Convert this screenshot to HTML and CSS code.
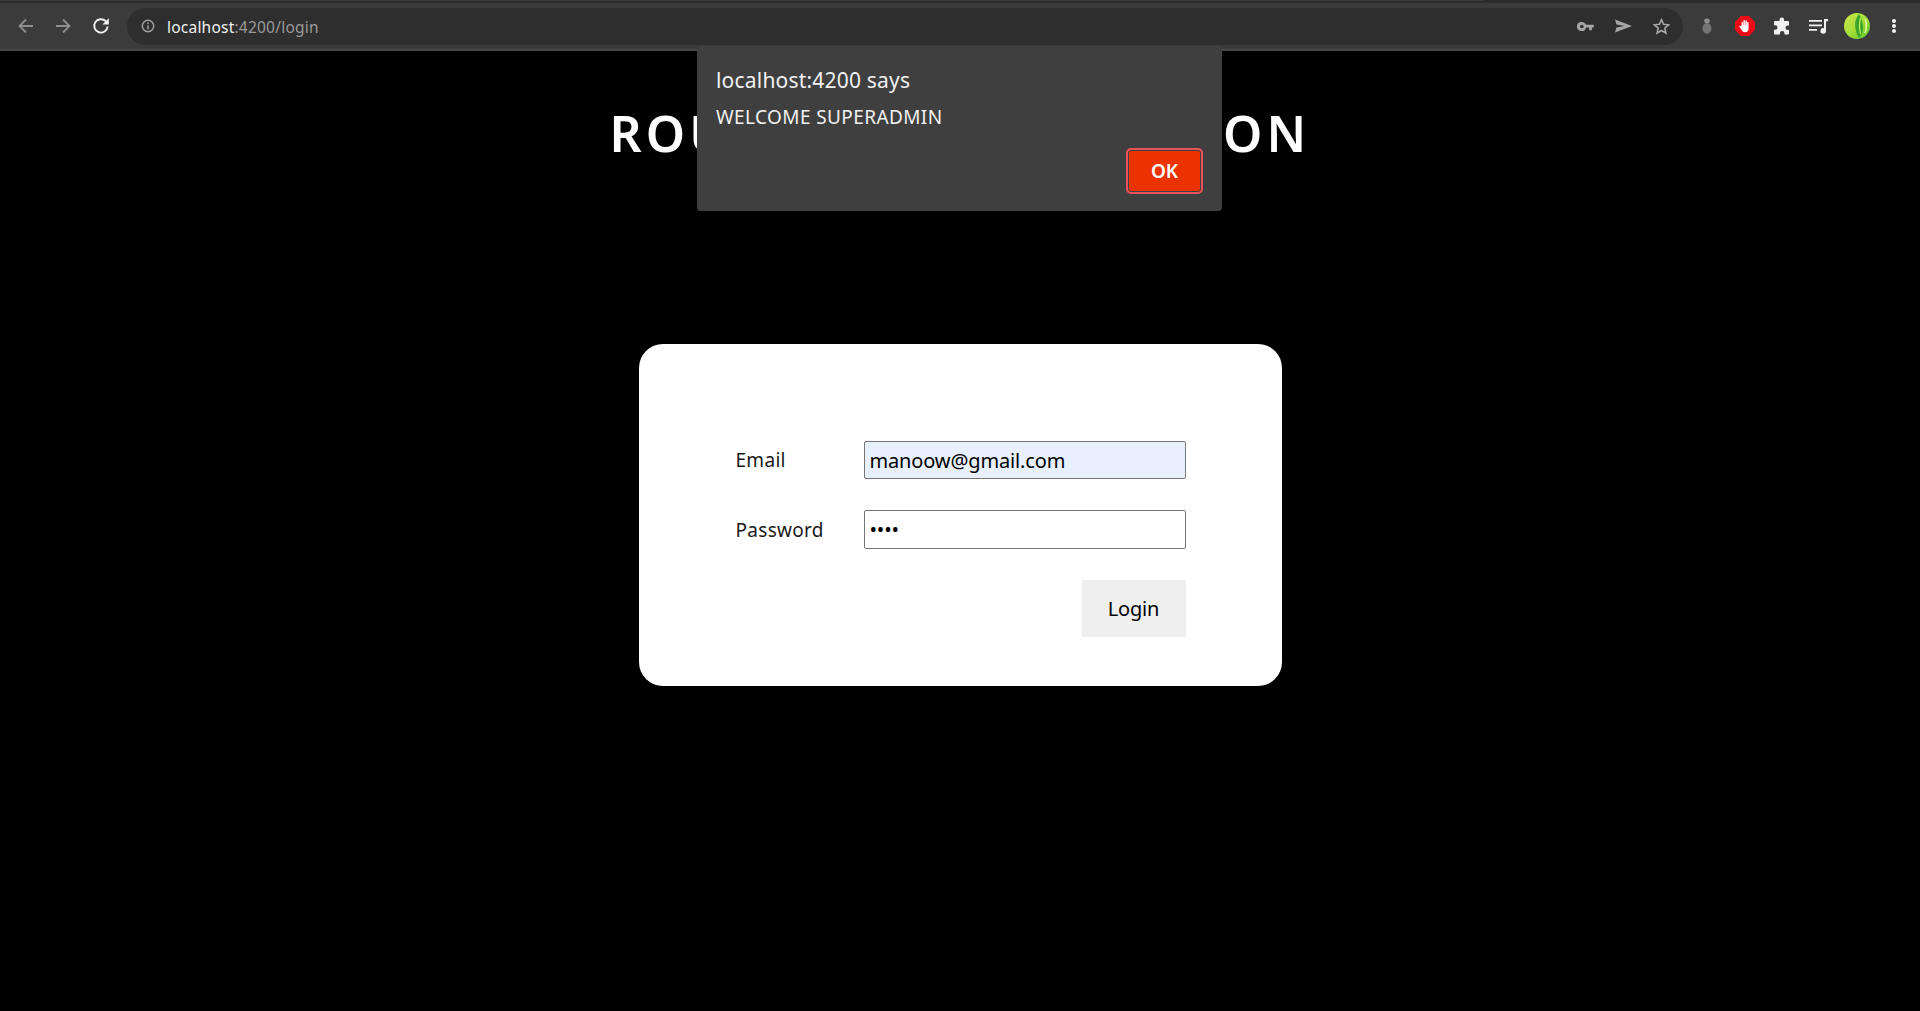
FILE: index.html
```html
<!DOCTYPE html>
<html lang="en">
<head>
<meta charset="utf-8">
<title>Login</title>
<link rel="stylesheet" href="styles.css">
</head>
<body>
<header class="chrome">
  <div class="tabstrip"><div class="tab-edge"></div></div>
  <div class="toolbar">
    <svg class="ico nav back" viewBox="0 0 16 16"><path d="M15 8H2M8 1.500 1.500 8 8 14.500"/></svg>
    <svg class="ico nav fwd" viewBox="0 0 16 16"><path d="M1 8h13M8 1.500 14.500 8 8 14.500"/></svg>
    <svg class="ico reload" viewBox="0 0 18 18"><path d="M15.600 9.500A6.700 6.700 0 1 1 13.700 4.200L15.800 6.300"/><path class="fill" d="M16.800 1.200v6.400h-6.400z"/></svg>
    <div class="omnibox">
      <svg class="ico info" viewBox="0 0 14 14"><circle cx="7" cy="7" r="5.700"/><path d="M7 6.200v4M7 3.600v1.500"/></svg>
      <div class="url"><span class="host">localhost</span>:4200/login</div>
      <div class="omni-actions">
        <svg class="act key" viewBox="0 0 18 12"><path fill-rule="evenodd" d="M5 1a5 5 0 0 1 4.600 3H18v3h-2v3h-3V7H9.600A5 5 0 1 1 5 1zm0 3a2 2 0 1 0 0 4 2 2 0 0 0 0-4z"/></svg>
        <svg class="act send" viewBox="0 0 18 14"><path d="M0 0l18 7-18 7 1.500-5.500L10 7 1.500 5.500z"/></svg>
        <svg class="act star" viewBox="0 0 18 18"><path d="M9 1.800l2.200 4.900 5.300.5-4 3.500 1.200 5.200L9 13.200l-4.700 2.700 1.200-5.200-4-3.500 5.300-.5z"/></svg>
      </div>
    </div>
    <div class="extensions">
      <svg class="ext bug" viewBox="0 0 10 16"><ellipse class="bug-head" cx="5" cy="3" rx="2.800" ry="2.400"/><ellipse class="bug-body" cx="5" cy="10.300" rx="4.500" ry="5.400"/></svg>
      <svg class="ext stop" viewBox="0 0 20 20"><path class="stop-bg" d="M6 0h8l6 6v8l-6 6H6l-6-6V6z"/><path class="stop-hand" d="M6.500 10V6.500a.8.8 0 0 1 1.500 0V9h.4V4.500a.8.8 0 0 1 1.500 0V9h.4V4.800a.8.8 0 0 1 1.500 0V9.500h.3V6.500a.8.8 0 0 1 1.500 0v6c0 2.300-1.400 3.700-3.500 3.700-2 0-3-1-3.800-2.600L4.500 11c-.5-1 .8-1.700 1.300-1z"/></svg>
      <svg class="ext puzzle" viewBox="0 0 18 18"><path d="M6.500 2.700a2.300 2.300 0 0 1 4.600 0V4H15a1 1 0 0 1 1 1v3.500h-1.200a2.300 2.300 0 0 0 0 4.600H16V16.500a1 1 0 0 1-1 1h-3.500v-1.200a2.300 2.300 0 0 0-4.600 0v1.200H2a1 1 0 0 1-1-1V12.800h1.200a2.300 2.300 0 0 0 0-4.600H1V5a1 1 0 0 1 1-1h4.500z"/></svg>
      <svg class="ext queue" viewBox="0 0 19 15"><path d="M0 1h13v1.800H0zM0 5.500h13v1.800H0zM0 10h8v1.800H0z"/><path d="M15 0h4v2.300h-2V12a2.800 2.800 0 1 1-2-2.700z"/></svg>
      <svg class="avatar" viewBox="0 0 26 26"><defs><linearGradient id="leaf" x1="0" y1="0" x2="1" y2="1"><stop offset="0" stop-color="#cfe84c"/><stop offset=".5" stop-color="#a6de3a"/><stop offset="1" stop-color="#5cc42c"/></linearGradient></defs><circle cx="13" cy="13" r="13" fill="url(#leaf)"/><path d="M15 1c-3 4-4.500 8-3.800 13 .5 4 1.800 8 3.800 11 3-3 4.500-7 4-12C18.500 8 17 4 15 1z" fill="#3da52b"/><path d="M16.500 5c-1.200 5-1.200 11 0 16" stroke="#b9ea58" stroke-width="1.300" fill="none"/><path d="M21.500 6c1 4 1 10-.5 14" stroke="#e4f79a" stroke-width="1.500" fill="none"/></svg>
      <div class="kebab"><i></i><i></i><i></i></div>
    </div>
  </div>
</header>

<main class="page">
  <h1 class="title">ROUTE AUTHENTICATION</h1>
  <form class="card">
    <div class="row"><label class="label" for="email">Email</label><input class="field autofilled" id="email" type="text" value="manoow@gmail.com"></div>
    <div class="row row-pw"><label class="label" for="pw">Password</label><input class="field" id="pw" type="password" value="abcd"></div>
    <div class="actions"><button class="login" type="button">Login</button></div>
  </form>
</main>

<div class="dialog">
  <div class="dlg-title">localhost:4200 says</div>
  <div class="dlg-msg">WELCOME SUPERADMIN</div>
  <div class="dlg-actions"><button class="ok" type="button">OK</button></div>
</div>
</body>
</html>
```
FILE: styles.css
```css
* { box-sizing: border-box; }
html, body { margin: 0; height: 100%; }
body {
  background: #000;
  font-family: "Noto Sans", "Open Sans", sans-serif;
  overflow: hidden;
}
.chrome { height: 51px; background: #3b3b3b; }
.tabstrip { height: 3px; background: #2b2b2b; }
.tab-edge { width: 1484px; height: 1px; background: #3b3b3b; }
.toolbar { height: 48px; display: flex; align-items: center; border-bottom: 2px solid #474747; }
.ico { fill: none; stroke: #8e8e8e; stroke-width: 1.800; flex: none; }
.nav { width: 16px; height: 16px; }
.back { margin-left: 18px; }
.fwd { margin-left: 21px; }
.reload { width: 18px; height: 18px; margin-left: 21px; stroke: #f1f1f1; stroke-width: 1.900; }
.reload .fill { fill: #f1f1f1; stroke: none; }
.omnibox {
  width: 1556px; height: 37px; margin-left: 17px; border-radius: 19px; background: #2e2e2e;
  display: flex; align-items: center; padding-left: 14px;
}
.info { width: 14px; height: 14px; stroke: #a0a0a0; stroke-width: 1.500; }
.url { margin-left: 12px; padding-top: 1px; font-size: 15.500px; color: #9a9a9a; letter-spacing: .22px; white-space: nowrap; }
.host { color: #f1f1f1; }
.omni-actions { margin-left: auto; display: flex; align-items: center; gap: 21px; padding-right: 13px; }
.act { fill: #a6a6a6; flex: none; }
.key { width: 17px; height: 11px; }
.send { width: 17px; height: 14px; }
.star { width: 17px; height: 17px; fill: none; stroke: #a6a6a6; stroke-width: 1.700; }
.extensions { display: flex; align-items: center; flex: 1; }
.ext { flex: none; }
.bug { width: 10px; height: 16px; margin-left: 19px; }
.bug-head { fill: #8e8e8e; }
.bug-body { fill: #747474; }
.stop { width: 20px; height: 20px; margin-left: 23px; }
.stop-bg { fill: #ec0a17; }
.stop-hand { fill: #fff; }
.puzzle { width: 18px; height: 18px; margin-left: 18px; fill: #f1f1f1; }
.queue { width: 19px; height: 15px; margin-left: 18px; fill: #f1f1f1; }
.avatar { width: 26px; height: 26px; margin-left: 16px; flex: none; }
.kebab { width: 4px; margin-left: 22px; display: flex; flex-direction: column; gap: 1px; }
.kebab i { display: block; width: 4px; height: 4px; border-radius: 50%; background: #f1f1f1; }

.page { display: flex; flex-direction: column; align-items: center; }
.title {
  margin: 57px 0 0; color: #fff; font-size: 50px; font-weight: 600; line-height: 50px;
  letter-spacing: 4.150px; white-space: nowrap;
}
.card {
  width: 643px; height: 342px; margin: 186px 0 0; background: #fff; border-radius: 24px;
  padding: 97px 96px 0 97px;
}
.row { display: flex; align-items: center; height: 38px; }
.row-pw { margin-top: 31px; height: 39px; }
.label { width: 128px; font-size: 19px; color: #1a1a1a; letter-spacing: .3px; }
.field {
  width: 322px; height: 100%; border: 1px solid #767676; border-radius: 2px; padding: 0 5px;
  font-family: inherit; font-size: 20px; letter-spacing: -.15px; color: #000; background: #fff; outline: none;
}
.autofilled { background: #e8f0fe; }
.actions { display: flex; justify-content: flex-end; margin-top: 31px; }
.login {
  width: 104px; height: 57px; border: 0; background: #efefef; color: #000;
  font-family: inherit; font-size: 20px; letter-spacing: -.2px; padding: 0;
}

.dialog {
  position: absolute; left: 697px; top: 46px; width: 525px; height: 165px;
  background: #3f3f3f; border-radius: 4px; padding: 20px 19px 0 19px; color: #f1f1f1;
  display: flex; flex-direction: column;
}
.dlg-title { font-size: 21px; line-height: 28px; letter-spacing: .2px; }
.dlg-msg { font-size: 19px; line-height: 26px; margin-top: 10px; letter-spacing: .4px; }
.dlg-actions { display: flex; justify-content: flex-end; margin-top: 18px; }
.ok {
  width: 77px; height: 46px; border-radius: 5px; border: 2px solid #e9535a; background: #ec3200; outline: 1px solid #3f3f3f; outline-offset: -3px;
  color: #fff; font-family: inherit; font-size: 19px; font-weight: 600; padding: 0;
}
```
